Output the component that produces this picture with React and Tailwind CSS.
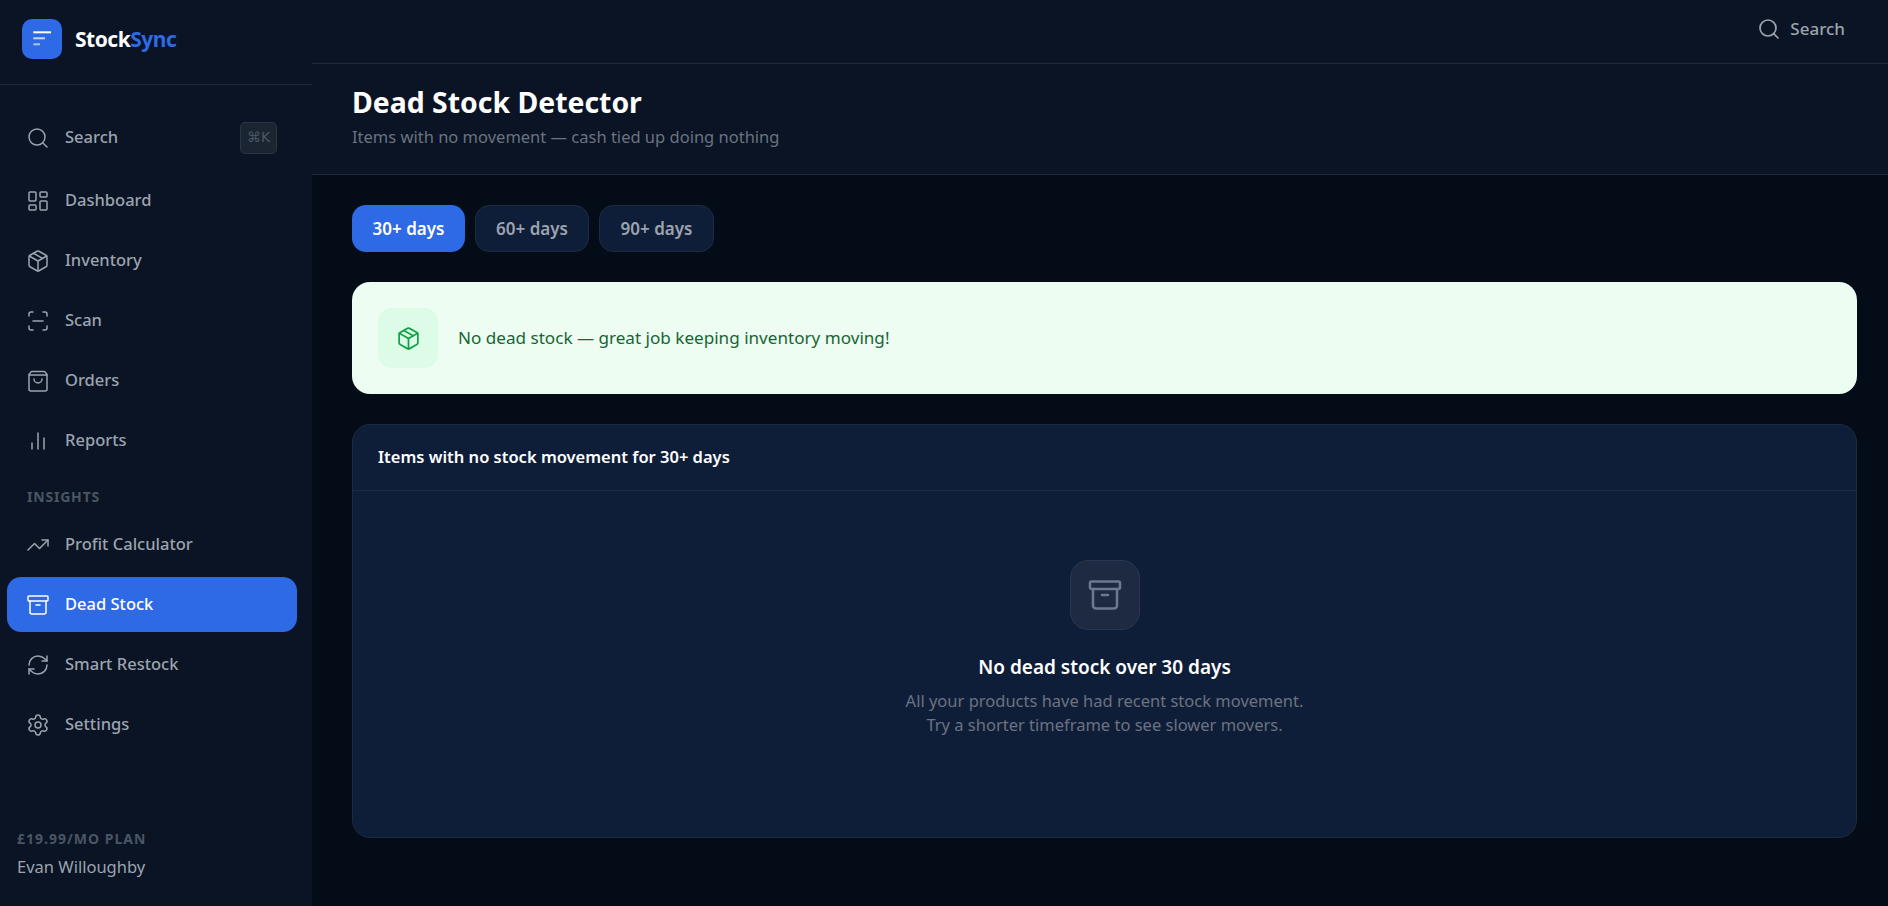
import React from 'react';
import {
  Search,
  LayoutDashboard,
  Package,
  ScanLine,
  TrendingUp,
  Archive,
  RefreshCw,
  Settings,
} from 'lucide-react';

const BagIcon = (props) => (
  <svg viewBox="0 0 24 24" fill="none" stroke="currentColor" strokeWidth="1.5" strokeLinecap="round" strokeLinejoin="round" {...props}>
    <path d="M6 2.5h12a1.5 1.5 0 0 1 1.2.6L21 5.5V20a2 2 0 0 1-2 2H5a2 2 0 0 1-2-2V5.5l1.8-2.4A1.5 1.5 0 0 1 6 2.5Z" />
    <path d="M3 6h18" />
    <path d="M16 10a4 4 0 0 1-8 0" />
  </svg>
);

const BarsIcon = (props) => (
  <svg viewBox="0 0 24 24" fill="none" stroke="currentColor" strokeWidth="1.5" strokeLinecap="round" {...props}>
    <path d="M6 20v-6" />
    <path d="M12 20V4" />
    <path d="M18 20V9" />
  </svg>
);

const mainNav = [
  { label: 'Dashboard', icon: LayoutDashboard },
  { label: 'Inventory', icon: Package },
  { label: 'Scan', icon: ScanLine },
  { label: 'Orders', icon: BagIcon },
  { label: 'Reports', icon: BarsIcon },
];

const insightNav = [
  { label: 'Profit Calculator', icon: TrendingUp },
  { label: 'Dead Stock', icon: Archive, active: true },
  { label: 'Smart Restock', icon: RefreshCw },
  { label: 'Settings', icon: Settings },
];

const NavItem = ({ item }) => {
  const Icon = item.icon;
  return (
    <div
      className={`flex items-center gap-[15px] h-[55px] pl-[19px] ml-[7px] mr-[15px] mb-[5px] rounded-[14px] text-[16.5px] font-medium ${
        item.active ? 'bg-[#2f6ae6] text-white' : 'text-[#9ca3af]'
      }`}
    >
      <Icon className="w-[24px] h-[24px] shrink-0" strokeWidth={1.5} />
      <span>{item.label}</span>
    </div>
  );
};

const App = () => {
  return (
    <div className="flex h-[906px] overflow-hidden bg-[#040c18] font-['Noto_Sans',sans-serif]">
      {/* Sidebar */}
      <aside className="w-[312px] shrink-0 flex flex-col bg-[#0a1424]">
        <div className="h-[85px] shrink-0 flex items-center gap-[13px] pl-[22px] pb-[6px] border-b border-[#1e293b]">
          <div className="w-[40px] h-[40px] rounded-[10px] bg-[#2f6ae6] flex items-center justify-center">
            <svg viewBox="0 0 24 24" className="w-[24px] h-[24px]" fill="none">
              <path d="M3.3 5.3H21" stroke="#ffffff" strokeWidth="2" />
              <path d="M3.3 11.3H15" stroke="#c7d7fb" strokeWidth="2" />
              <path d="M3.3 17.3H10" stroke="#a9c2f8" strokeWidth="2" />
            </svg>
          </div>
          <div className="pt-[1px] text-[21px] font-bold tracking-[-0.5px] text-white">
            Stock<span className="text-[#2f6ae6]">Sync</span>
          </div>
        </div>

        <nav className="pt-[25px] flex-1">
          <div className="flex items-center h-[55px] pl-[26px] pr-[35px] mb-[8px] text-[16.5px] font-medium text-[#9ca3af]">
            <Search className="w-[24px] h-[24px] mr-[15px]" strokeWidth={1.5} />
            <span className="flex-1">Search</span>
            <span className="w-[37px] h-[32px] flex items-center justify-center rounded-[5px] border border-[#2a3442] bg-[#1b2532] text-[14px] font-normal font-['DejaVu_Sans',sans-serif] text-[#4b5563]">
              ⌘K
            </span>
          </div>
          {mainNav.map((item) => (
            <NavItem key={item.label} item={item} />
          ))}
          <div className="px-[27px] pt-[14px] pb-[10px] text-[14px] leading-[20px] font-bold tracking-[0.8px] text-[#4b5563]">
            INSIGHTS
          </div>
          {insightNav.map((item) => (
            <NavItem key={item.label} item={item} />
          ))}
        </nav>

        <div className="px-[17px] pb-[27px]">
          <div className="text-[14px] leading-[20px] font-bold tracking-[1px] text-[#4b5563]">£19.99/MO PLAN</div>
          <div className="mt-[6px] text-[16.5px] leading-[24px] text-[#9ca3af]">Evan Willoughby</div>
        </div>
      </aside>

      {/* Main */}
      <div className="flex-1 min-w-0 flex flex-col">
        <div className="h-[64px] shrink-0 flex items-center justify-end pr-[43px] pb-[5px] bg-[#0a1424] border-b border-[#1e293b] text-[#9ca3af]">
          <Search className="w-[24px] h-[24px] mr-[9px]" strokeWidth={1.7} />
          <span className="text-[17px] font-medium">Search</span>
        </div>

        <header className="h-[111px] shrink-0 pl-[40px] pt-[18px] bg-[#0a1424] border-b border-[#1e293b]">
          <h1 className="text-[28.4px] leading-[40px] font-bold text-white">Dead Stock Detector</h1>
          <p className="mt-[2px] text-[16.5px] leading-[26px] text-[#6b7280]">Items with no movement — cash tied up doing nothing</p>
        </header>

        <main className="pl-[40px] pr-[31px] pt-[30px]">
          <div className="flex gap-[10px]">
            <button className="w-[113px] h-[47px] rounded-[14px] bg-[#2f6ae6] text-white text-[17px] font-semibold">30+ days</button>
            <button className="w-[114px] h-[47px] rounded-[14px] bg-[#0f1e38] border border-[#1e2a40] text-[#9ca3af] text-[17px] font-semibold">60+ days</button>
            <button className="w-[115px] h-[47px] rounded-[14px] bg-[#0f1e38] border border-[#1e2a40] text-[#9ca3af] text-[17px] font-semibold">90+ days</button>
          </div>

          <div className="mt-[30px] h-[112px] rounded-[18px] bg-[#edfdf1] flex items-center gap-[20px] pl-[26px]">
            <div className="w-[60px] h-[60px] rounded-[14px] bg-[#dcfce7] flex items-center justify-center">
              <Package className="w-[25px] h-[25px] text-[#16a34a]" strokeWidth={1.7} />
            </div>
            <p className="text-[17.1px] text-[#166534]">No dead stock — great job keeping inventory moving!</p>
          </div>

          <section className="mt-[30px] h-[414px] rounded-[18px] bg-[#0f1e38] border border-[#1e2a40]">
            <div className="h-[66px] flex items-center pl-[25px] border-b border-[#1e2a40] text-[16.5px] font-semibold text-white">
              Items with no stock movement for 30+ days
            </div>
            <div className="flex flex-col items-center pt-[69px]">
              <div className="w-[70px] h-[70px] rounded-[18px] bg-[#1d2a42] border border-[#2a3750] flex items-center justify-center">
                <Archive className="w-[36px] h-[36px] text-[#6b7a90]" strokeWidth={1.7} />
              </div>
              <h2 className="mt-[23px] text-[19px] leading-[28px] font-semibold text-white">No dead stock over 30 days</h2>
              <p className="mt-[8px] text-[16.5px] leading-[24px] text-[#6b7280] text-center">
                All your products have had recent stock movement.
                <br />
                Try a shorter timeframe to see slower movers.
              </p>
            </div>
          </section>
        </main>
      </div>
    </div>
  );
};

export default App;
